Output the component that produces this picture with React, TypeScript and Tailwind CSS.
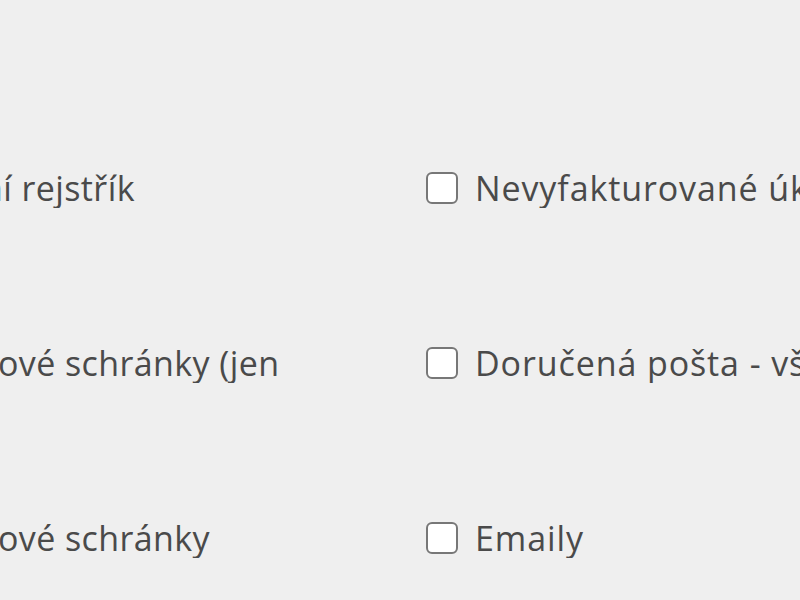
import React from "react";

const rows = [
  { left: "ní rejstřík", leftShift: "-ml-[18px]", right: "Nevyfakturované úkony" },
  { left: "ové schránky (jen", leftShift: "-ml-[2px]", right: "Doručená pošta - všechny" },
  { left: "ové schránky", leftShift: "-ml-[2px]", right: "Emaily" },
];

export default function App() {
  return (
    <div
      className="w-[800px] h-[600px] overflow-hidden bg-[#efefef] text-[#4a4a4a] pt-[100px]"
      style={{ fontFamily: '"Open Sans", "DejaVu Sans", sans-serif' }}
    >
      {rows.map((r, i) => (
        <div key={i} className="h-[175px] grid grid-cols-[426px_374px] items-center">
          <div className="overflow-hidden whitespace-nowrap">
            <span className={`block text-[34px] leading-[40px] tracking-[0.4px] ${r.leftShift}`}>{r.left}</span>
          </div>
          <label className="flex items-center gap-[17px] whitespace-nowrap overflow-hidden">
            <span className="shrink-0 w-[32px] h-[32px] rounded-[6px] border-2 border-[#777777] bg-white" />
            <span className="text-[34px] leading-[40px] tracking-[0.9px]">{r.right}</span>
          </label>
        </div>
      ))}
    </div>
  );
}
